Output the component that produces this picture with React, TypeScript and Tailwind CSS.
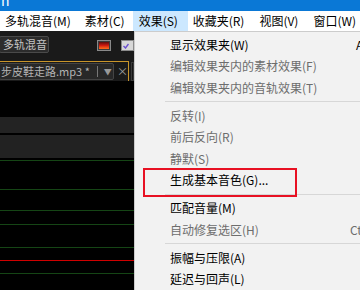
import React from "react";

type Item = { label: string; enabled: boolean; sep?: boolean; boxed?: boolean; shortcut?: string; scX?: number };

const items: Item[] = [
  { label: "显示效果夹(W)", enabled: true, shortcut: "A", scX: 221 },
  { label: "编辑效果夹内的素材效果(F)", enabled: false },
  { label: "编辑效果夹内的音轨效果(T)", enabled: false, sep: true },
  { label: "反转(I)", enabled: false },
  { label: "前后反向(R)", enabled: false },
  { label: "静默(S)", enabled: false },
  { label: "生成基本音色(G)...", enabled: true, boxed: true, sep: true },
  { label: "匹配音量(M)", enabled: true },
  { label: "自动修复选区(H)", enabled: false, shortcut: "Ct", scX: 215, sep: true },
  { label: "振幅与压限(A)", enabled: true },
  { label: "延迟与回声(L)", enabled: true },
];

export default function App() {
  return (
    <div className="w-[360px] h-[290px] overflow-hidden bg-black font-['Noto_Sans_CJK_SC',sans-serif]">
      {/* title bar */}
      <div className="h-[11px] bg-[#0a78d6] overflow-hidden">
        <div className="text-white text-[14px] leading-[14px] -mt-[7px] pl-[1px]">n</div>
      </div>
      {/* menu bar */}
      <div className="h-[20px] bg-white flex items-stretch text-[12px] text-black leading-none">
        <span className="ml-[5px] flex items-center">多轨混音(M)</span>
        <span className="ml-[14px] flex items-center">素材(C)</span>
        <span className="ml-[8px] w-[55px] pl-[5px] flex items-center bg-[#cce8ff] border border-[#cce8ff]">效果(S)</span>
        <span className="ml-[5px] flex items-center">收藏夹(R)</span>
        <span className="ml-[15px] flex items-center">视图(V)</span>
        <span className="ml-[15px] flex items-center">窗口(W)</span>
      </div>
      <div className="flex h-[259px]">
        {/* left dark app area */}
        <div className="w-[134px] flex flex-col overflow-hidden bg-black">
          <div className="h-[30px] bg-[#1a1a1a] flex items-start pt-[5px]">
            <div className="-ml-[1px] w-[55px] h-[17px] bg-[#2c2c2c] border border-[#4a4a4a] rounded-[2px] flex items-center pl-[3px] text-[11px] text-[#c4c4c4] leading-none">
              多轨混音
            </div>
            <div className="ml-[48px] mt-[4px] w-[16px] h-[11px] border border-[#8a8a8a] p-[1px] bg-[#3a3a3a]">
              <div className="w-full h-full bg-gradient-to-t from-[#ff6a1a] via-[#d01a10] to-[#5a0c0c]" />
            </div>
            <div className="ml-[10px] mt-[4px] w-[14px] h-[11px] border border-[#8a8a8a] bg-[#d8d8d8] flex items-center pl-[1px]">
              <svg width="6" height="6" viewBox="0 0 6 6"><path d="M0.5 3 L2.5 5 L5.5 1" stroke="#6a50d0" strokeWidth="1.4" fill="none" /></svg>
            </div>
          </div>
          <div className="h-[20px] bg-[#1a1a1a] flex">
            <div className="w-[129px] h-[20px] border-t border-r border-[#c9952a] flex items-start">
              <div className="-ml-[1px] mt-[1px] w-[117px] h-[17px] bg-[#282828] border border-[#444] rounded-[2px] flex items-center text-[11px] text-[#b4b4b4] leading-none whitespace-nowrap">
                <span className="pl-[1px]">步皮鞋走路.mp3 *</span>
                <span className="ml-[7px] w-px h-[11px] bg-[#777]" />
                <span className="ml-[6px] text-[8px] text-[#999]">▼</span>
              </div>
              <span className="ml-[3px] mt-[4px] text-[11px] text-[#a0a0a0] leading-none">×</span>
            </div>
            <div className="ml-[2px] mt-[1px] w-[10px] h-[19px] border border-[#3a3a3a] bg-[#151515]" />
          </div>
          <div className="h-[36px] bg-black" />
          <div className="h-[16px] bg-[#232323]" />
          <div className="h-[2px] bg-black" />
          <div className="h-[23px] bg-[#222222]" />
          <div className="flex-1 bg-black flex flex-col">
            <div className="mt-[2px] h-px bg-[#154515]" />
            <div className="mt-[28px] h-px bg-[#154515]" />
            <div className="mt-[20px] h-px bg-[#154515]" />
            <div className="mt-[13px] h-px bg-[#154515]" />
            <div className="mt-[22px] h-px bg-[#154515]" />
            <div className="mt-[12px] h-px bg-[#d00000]" />
            <div className="mt-[12px] h-px bg-[#154515]" />
          </div>
        </div>
        {/* dropdown menu */}
        <div className="flex-1 bg-[#f2f2f2] border-l border-t border-[#cccccc] pt-[2px] flex flex-col text-[12px] leading-none">
          {items.map((it, i) => (
            <React.Fragment key={i}>
              <div className="relative h-[22px] flex items-center pl-[35px] whitespace-nowrap">
                <span className={it.enabled ? "text-black" : "text-[#6d6d6d]"}>{it.label}</span>
                {it.shortcut && (
                  <span
                    className={`absolute top-[5px] ${it.enabled ? "text-black" : "text-[#6d6d6d]"}`}
                    style={{ left: it.scX }}
                  >
                    {it.shortcut}
                  </span>
                )}
                {it.boxed && (
                  <div className="absolute left-[8px] -top-[1px] w-[154px] h-[29px] border-2 border-[#e81123] z-10" />
                )}
              </div>
              {it.sep && (
                <div className="h-[7px] flex items-center pl-[30px]">
                  <div className="w-full h-px bg-[#d7d7d7]" />
                </div>
              )}
            </React.Fragment>
          ))}
        </div>
      </div>
    </div>
  );
}
